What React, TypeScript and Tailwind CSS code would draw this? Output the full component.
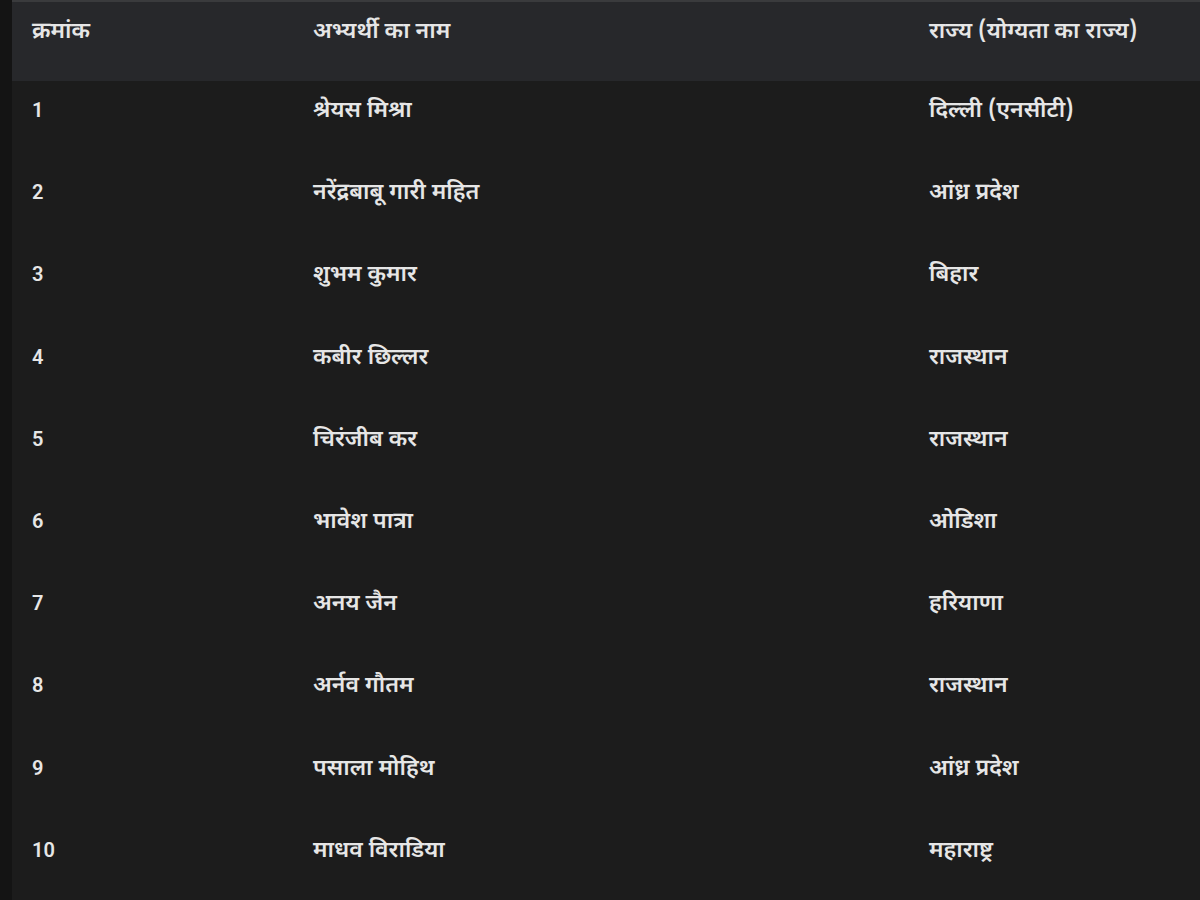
const ROWS: [string, string, string][] = [
  ['1', 'श्रेयस मिश्रा', 'दिल्ली (एनसीटी)'],
  ['2', 'नरेंद्रबाबू गारी महित', 'आंध्र प्रदेश'],
  ['3', 'शुभम कुमार', 'बिहार'],
  ['4', 'कबीर छिल्लर', 'राजस्थान'],
  ['5', 'चिरंजीब कर', 'राजस्थान'],
  ['6', 'भावेश पात्रा', 'ओडिशा'],
  ['7', 'अनय जैन', 'हरियाणा'],
  ['8', 'अर्नव गौतम', 'राजस्थान'],
  ['9', 'पसाला मोहिथ', 'आंध्र प्रदेश'],
  ['10', 'माधव विराडिया', 'महाराष्ट्र'],
];

const cell = 'px-5 pt-[15px] text-[20px] font-semibold leading-[28px]';
const hindi = "px-5 pt-[15px] font-['Noto_Sans_Devanagari','Noto_Sans',sans-serif] text-[23px] font-semibold leading-[30px]";

export default function App() {
  return (
    <div className="flex h-[900px] w-[1200px] overflow-hidden bg-[#141414] font-['Roboto','Noto_Sans',sans-serif] text-[#e6e6e6]">
      <div className="w-3 shrink-0" />
      <div className="flex-1 bg-[#1c1c1c]">
        <div className="grid h-[81px] grid-cols-[281px_616px_1fr] border-t-2 border-[#3a3b3d] bg-[#27282b]">
          <div className={hindi}>क्रमांक</div>
          <div className={hindi}>अभ्यर्थी का नाम</div>
          <div className={hindi}>राज्य (योग्यता का राज्य)</div>
        </div>
        {ROWS.map(([n, name, state]) => (
          <div key={n} className="grid h-[82.2px] grid-cols-[281px_616px_1fr]">
            <div className={cell}>{n}</div>
            <div className={hindi}>{name}</div>
            <div className={hindi}>{state}</div>
          </div>
        ))}
      </div>
    </div>
  );
}
